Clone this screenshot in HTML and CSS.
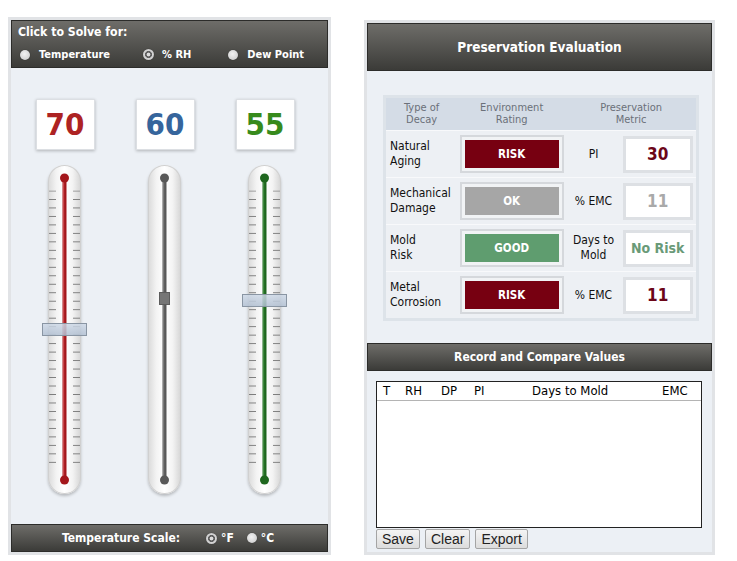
FILE: index.html
```html
<!DOCTYPE html>
<html lang="en">
<head>
    <meta charset="UTF-8">
    <title>Preservation Calculator</title>
    <link rel="stylesheet" href="styles.css">
</head>
<body>
    <div class="page">
        <!-- left: dial in the environment -->
        <div class="solver">
            <div class="bar solver-head">
                <h1>Click to Solve for:</h1>
                <div class="solve-options">
                    <span class="option opt-temp"><span class="radio"></span>Temperature</span>
                    <span class="option opt-rh"><span class="radio on"></span>% RH</span>
                    <span class="option"><span class="radio"></span>Dew Point</span>
                </div>
            </div>

            <div class="gauges">
                <div class="gauge">
                    <div class="reading temp">70</div>
                    <div class="tube">
                        <svg width="33" height="329" viewBox="0 0 33 329">
                            <defs>
                                <pattern id="ticks-temp" width="33" height="8.48" y="25.5" patternUnits="userSpaceOnUse">
                                    <path d="M1 0.5H8M25 0.5H32" stroke="#7c7c7c" stroke-width="1"/>
                                </pattern>
                            </defs>
                            <rect x="0" y="25.5" width="33" height="273" fill="url(#ticks-temp)"/>
                            <rect x="14.5" y="13" width="4" height="302" fill="#a3161b"/>
                            <rect x="15" y="13" width="1.2" height="302" fill="#c9484b"/>
                            <circle cx="16.5" cy="13" r="4.5" fill="#a3161b"/>
                            <circle cx="16.5" cy="315" r="4.5" fill="#a3161b"/>
                        </svg>
                        <div class="handle wide" style="top: 158px"></div>
                    </div>
                </div>
                <div class="gauge">
                    <div class="reading rh">60</div>
                    <div class="tube">
                        <svg width="33" height="329" viewBox="0 0 33 329">
                            <rect x="14.5" y="13" width="4" height="302" fill="#585858"/>
                            <rect x="15" y="13" width="1.2" height="302" fill="#7a7a7a"/>
                            <circle cx="16.5" cy="13" r="4.5" fill="#585858"/>
                            <circle cx="16.5" cy="315" r="4.5" fill="#585858"/>
                        </svg>
                        <div class="handle small" style="top: 127px"></div>
                    </div>
                </div>
                <div class="gauge">
                    <div class="reading dew">55</div>
                    <div class="tube">
                        <svg width="33" height="329" viewBox="0 0 33 329">
                            <defs>
                                <pattern id="ticks-dew" width="33" height="8.48" y="25.5" patternUnits="userSpaceOnUse">
                                    <path d="M1 0.5H8M25 0.5H32" stroke="#7c7c7c" stroke-width="1"/>
                                </pattern>
                            </defs>
                            <rect x="0" y="25.5" width="33" height="273" fill="url(#ticks-dew)"/>
                            <rect x="14.5" y="13" width="4" height="302" fill="#1e661e"/>
                            <rect x="15" y="13" width="1.2" height="302" fill="#3f8a3f"/>
                            <circle cx="16.5" cy="13" r="4.5" fill="#1e661e"/>
                            <circle cx="16.5" cy="315" r="4.5" fill="#1e661e"/>
                        </svg>
                        <div class="handle wide" style="top: 129px"></div>
                    </div>
                </div>
            </div>

            <div class="bar scale-bar">
                <span class="scale-label">Temperature Scale:</span>
                <span class="option"><span class="radio on"></span>&deg;F</span>
                <span class="option"><span class="radio"></span>&deg;C</span>
            </div>
        </div>

        <!-- right: what the environment means for the collection -->
        <div class="evaluation">
            <div class="bar eval-head">Preservation Evaluation</div>

            <table class="decay-table">
                <colgroup>
                    <col style="width: 72px">
                    <col style="width: 108px">
                    <col style="width: 54px">
                    <col style="width: 76px">
                </colgroup>
                <thead>
                    <tr>
                        <th>Type of<br>Decay</th>
                        <th>Environment<br>Rating</th>
                        <th colspan="2">Preservation<br>Metric</th>
                    </tr>
                </thead>
                <tbody>
                    <tr>
                        <td class="decay">Natural<br>Aging</td>
                        <td><div class="rating"><span class="risk">RISK</span></div></td>
                        <td class="metric">PI</td>
                        <td><div class="value risk-text">30</div></td>
                    </tr>
                    <tr>
                        <td class="decay">Mechanical<br>Damage</td>
                        <td><div class="rating"><span class="ok">OK</span></div></td>
                        <td class="metric">% EMC</td>
                        <td><div class="value ok-text">11</div></td>
                    </tr>
                    <tr>
                        <td class="decay">Mold<br>Risk</td>
                        <td><div class="rating"><span class="good">GOOD</span></div></td>
                        <td class="metric">Days to<br>Mold</td>
                        <td><div class="value good-text">No Risk</div></td>
                    </tr>
                    <tr>
                        <td class="decay">Metal<br>Corrosion</td>
                        <td><div class="rating"><span class="risk">RISK</span></div></td>
                        <td class="metric">% EMC</td>
                        <td><div class="value risk-text">11</div></td>
                    </tr>
                </tbody>
            </table>

            <div class="bar record-head">Record and Compare Values</div>
            <div class="record-box">
                <div class="record-cols">
                    <span>T</span>
                    <span>RH</span>
                    <span>DP</span>
                    <span>PI</span>
                    <span>Days to Mold</span>
                    <span>EMC</span>
                </div>
            </div>
            <div class="record-buttons">
                <button type="button">Save</button>
                <button type="button">Clear</button>
                <button type="button">Export</button>
            </div>
        </div>
    </div>
</body>
</html>
```

FILE: styles.css
```css
body {
    margin: 0;
    padding: 0;
    background: #fff;
    font-family: "DejaVu Sans Condensed", "DejaVu Sans", sans-serif;
    font-stretch: condensed;
    color: #1a1a1a;
}

.page {
    display: flex;
    align-items: flex-start;
    padding: 17px 0 0 8px;
    gap: 33px;
}

/* dark gradient bars */
.bar {
    box-sizing: border-box;
    background: linear-gradient(to bottom, #6e6d69, #3b3b38);
    border: 1px solid #2c2c2a;
    color: #fff;
    font-weight: bold;
}

/* ---------- left panel ---------- */
.solver {
    width: 317px;
    height: 532px;
    border: 3px solid #e1e3e6;
    background: #ecf0f5;
    display: flex;
    flex-direction: column;
}

.solver-head {
    height: 48px;
    padding: 4px 6px 0 6px;
}

.solver-head h1 {
    margin: 0;
    font-size: 12.2px;
    line-height: 15px;
}

.solve-options {
    display: flex;
    align-items: center;
    margin-top: 8px;
    font-size: 11px;
    padding-left: 2px;
}

.option {
    display: flex;
    align-items: center;
}

.opt-temp {
    margin-right: 33px;
}

.opt-rh {
    margin-right: 37px;
}

.radio {
    display: inline-block;
    width: 10px;
    height: 10px;
    border-radius: 50%;
    margin-right: 9px;
    background: radial-gradient(circle at 45% 40%, #f2f2f2, #c6c6c6);
    box-shadow: 0 0 1px rgba(0, 0, 0, 0.6);
}

.radio.on {
    width: 11px;
    height: 11px;
    margin-right: 8px;
    background: radial-gradient(circle, #dcdcdc 0 1.6px, #606060 2.2px 3.2px, #d6d6d6 3.8px, #b4b4b4 100%);
}

.gauges {
    flex: 1;
    display: grid;
    grid-template-columns: repeat(3, 100px);
    padding: 31px 0 0 4px;
}

.gauge {
    display: flex;
    flex-direction: column;
    align-items: center;
}

.reading {
    box-sizing: border-box;
    width: 59px;
    height: 51px;
    background: #fff;
    border: 1px solid #dcdfe3;
    box-shadow: 0 1px 3px rgba(0, 0, 0, 0.25);
    font-size: 31px;
    font-weight: bold;
    line-height: 49px;
    text-align: center;
}

.reading.temp { color: #ad2323; }
.reading.rh { color: #36659c; }
.reading.dew { color: #378a1c; }

.tube {
    position: relative;
    width: 33px;
    height: 329px;
    margin: 15px 2px 0 0;
    border-radius: 17px;
    background: linear-gradient(to right, #d9d9d9, #f3f3f3 25%, #fff 50%, #f3f3f3 75%, #d4d4d4);
    box-shadow: inset 0 0 0 1px #d0d0d0, 0 2px 3px rgba(0, 0, 0, 0.22);
}

.tube svg {
    display: block;
}

.handle {
    position: absolute;
    box-sizing: border-box;
    height: 13px;
}

.handle.wide {
    left: -6px;
    width: 45px;
    background: linear-gradient(to bottom, rgba(205, 216, 230, 0.85), rgba(178, 192, 210, 0.85));
    border: 1px solid #8995a3;
}

.handle.small {
    left: 11px;
    width: 11px;
    background: #767676;
    border: 1px solid #5c5c5c;
}

.scale-bar {
    height: 28px;
    display: flex;
    align-items: center;
    padding-left: 50px;
    font-size: 12px;
}

.scale-label {
    margin-right: 26px;
}

.scale-bar .option {
    margin-right: 13px;
}

.scale-bar .radio {
    margin-right: 4px;
}

/* ---------- right panel ---------- */
.evaluation {
    width: 345px;
    height: 529px;
    margin-top: 3px;
    border: 3px solid #e1e3e6;
    background: #ecf0f5;
}

.eval-head {
    height: 48px;
    font-size: 13.5px;
    line-height: 46px;
    text-align: center;
}

.decay-table {
    margin: 24px 0 0 16px;
    width: 316px;
    border-collapse: collapse;
    border: 3px solid #dde3e9;
    table-layout: fixed;
}

.decay-table th {
    height: 32px;
    padding: 0;
    background: #d4dce6;
    color: #6b7079;
    font-weight: normal;
    font-size: 11px;
    line-height: 12px;
    text-align: center;
}

.decay-table td {
    height: 46px;
    padding: 0;
    background: #edf0f4;
    border-top: 1px solid #f8f9fb;
    font-size: 12px;
    line-height: 15px;
    color: #111;
}

.decay-table td.decay {
    padding-left: 4px;
}

.decay-table td.metric {
    text-align: center;
}

.rating {
    width: 94px;
    height: 28px;
    margin: 0 auto;
    border: 2px solid #d5d8dc;
    padding: 3px;
    background: #f1f3f5;
}

.rating span {
    display: block;
    height: 28px;
    color: #fff;
    font-weight: bold;
    font-size: 11.5px;
    line-height: 28px;
    text-align: center;
}

.rating .risk { background: #770011; }
.rating .ok { background: #a6a6a6; }
.rating .good { background: #5f9d6f; }

.value {
    box-sizing: border-box;
    width: 70px;
    height: 37px;
    margin-left: 2px;
    border: 3px solid #dde0e4;
    background: #fff;
    text-align: center;
    font-weight: bold;
    font-size: 17px;
    line-height: 31px;
}

.risk-text { color: #6c0618; }
.ok-text { color: #a9a9a9; }
.good-text {
    color: #6a9a78;
    font-size: 14px;
}

.record-head {
    height: 28px;
    margin-top: 22px;
    font-size: 12px;
    line-height: 26px;
    text-align: center;
}

.record-box {
    box-sizing: border-box;
    width: 326px;
    height: 147px;
    margin: 10px 0 0 9px;
    border: 1px solid #222;
    background: #fff;
}

.record-cols {
    display: grid;
    grid-template-columns: 22px 36px 33px 58px 130px auto;
    height: 18px;
    padding-left: 6px;
    border-bottom: 1px solid #b4b4b4;
    font-size: 13px;
    line-height: 17px;
    color: #000;
}

.record-buttons {
    display: flex;
    gap: 5px;
    margin: 1px 0 0 9px;
}

.record-buttons button {
    height: 20px;
    padding: 0 5px;
    border: 1px solid #a4a4a4;
    border-radius: 2px;
    background: linear-gradient(to bottom, #f4f4f4, #dcdcdc);
    font-family: "Liberation Sans", Arial, sans-serif;
    font-size: 14px;
    color: #222;
}
```
